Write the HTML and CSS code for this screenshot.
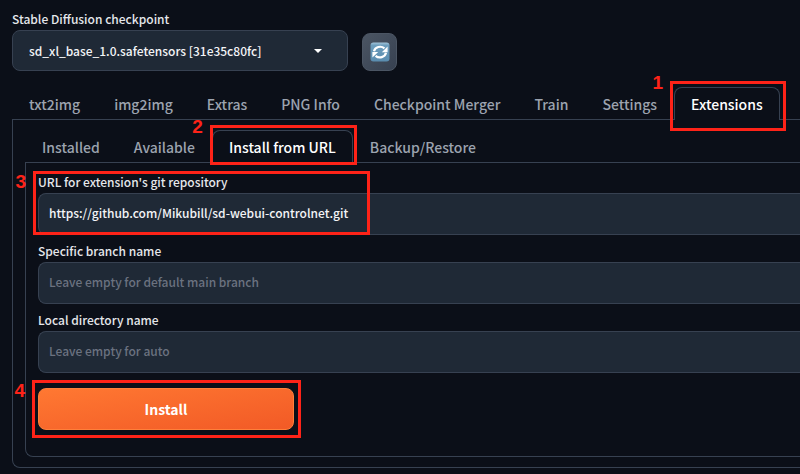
FILE: index.html
```html
<!DOCTYPE html>
<html lang="en">

<head>
    <meta charset="UTF-8" />
    <meta name="viewport" content="width=device-width, initial-scale=1.0" />
    <title>Stable Diffusion</title>
    <link rel="stylesheet" href="styles.css">
</head>

<body>
    <header class="quicksettings">
        <div class="checkpoint">
            <label class="label" for="checkpoint">Stable Diffusion checkpoint</label>
            <div class="select-wrap">
                <select class="control select" id="checkpoint">
                    <option>sd_xl_base_1.0.safetensors [31e35c80fc]</option>
                </select>
                <svg class="arrow" viewBox="0 0 8 4" aria-hidden="true">
                    <path d="M0 0h8L4 4z" fill="#fff" />
                </svg>
            </div>
        </div>
        <button class="refresh" type="button" aria-label="Refresh">
            <svg viewBox="0 0 20 20" aria-hidden="true">
                <defs>
                    <linearGradient id="tile" x1="0" y1="0" x2="0" y2="1">
                        <stop offset="0" stop-color="#a3c5da" />
                        <stop offset="0.15" stop-color="#6d9dbc" />
                        <stop offset="1" stop-color="#5a8caf" />
                    </linearGradient>
                </defs>
                <rect x="0.5" y="0.5" width="19" height="19" rx="3" fill="url(#tile)" />
                <path d="M4 9.2A6.2 5.6 0 0 1 14.4 6.4M16 10.8A6.2 5.6 0 0 1 5.6 13.8" fill="none" stroke="#fff" stroke-width="2.2" />
                <path d="M17.6 4.6v5.6h-5.8zM2.4 15.6V10h5.8z" fill="#fff" />
            </svg>
        </button>
    </header>

    <nav class="tabs">
        <button class="tab" type="button">txt2img</button>
        <button class="tab" type="button">img2img</button>
        <button class="tab" type="button">Extras</button>
        <button class="tab" type="button">PNG Info</button>
        <button class="tab" type="button">Checkpoint Merger</button>
        <button class="tab" type="button">Train</button>
        <button class="tab" type="button">Settings</button>
        <button class="tab active" type="button">Extensions
            <span class="callout callout-main-tab"><span class="step">1</span></span>
        </button>
    </nav>

    <main class="panel">
        <nav class="tabs">
            <button class="tab" type="button">Installed</button>
            <button class="tab" type="button">Available</button>
            <button class="tab active" type="button">Install from URL
                <span class="callout callout-sub-tab"><span class="step">2</span></span>
            </button>
            <button class="tab" type="button">Backup/Restore</button>
        </nav>

        <form class="panel panel-form">
            <div class="field">
                <label class="label" for="url">URL for extension's git repository</label>
                <input class="control" id="url" type="text" value="https://github.com/Mikubill/sd-webui-controlnet.git">
                <span class="callout callout-url"><span class="step step-low">3</span></span>
            </div>
            <div class="field">
                <label class="label" for="branch">Specific branch name</label>
                <input class="control" id="branch" type="text" placeholder="Leave empty for default main branch">
            </div>
            <div class="field">
                <label class="label" for="dirname">Local directory name</label>
                <input class="control" id="dirname" type="text" placeholder="Leave empty for auto">
            </div>
            <button class="install" type="button">Install
                <span class="callout callout-install"><span class="step step-low">4</span></span>
            </button>
        </form>
    </main>
</body>

</html>
```
FILE: styles.css
```css
* {
    margin: 0;
    padding: 0;
    box-sizing: border-box;
}

body {
    font-family: "Noto Sans CJK JP", "Open Sans", sans-serif;
    font-size: 12px;
    font-weight: 500;
    background: #0b0f18;
    color: #f3f4f6;
    padding: 9px 0 6px 12px;
    overflow-x: hidden;
}

button,
input,
select {
    font: inherit;
    color: inherit;
}

.label {
    display: block;
    padding-bottom: 1px;
    line-height: 20px;
    color: #e5e7eb;
}

.control {
    display: block;
    width: 100%;
    height: 42px;
    padding: 0 10px 3px;
    color: #f3f4f6;
    background: #1f2936;
    border: 1px solid #374151;
    border-radius: 8px;
}

.control::placeholder {
    color: #6b7280;
    opacity: 1;
}

/* Checkpoint row */
.quicksettings {
    display: flex;
    align-items: flex-end;
    gap: 14px;
    margin-bottom: 16px;
}

.checkpoint {
    width: 336px;
}

.select-wrap {
    position: relative;
}

.select {
    height: 41px;
    padding: 0 16px;
    appearance: none;
}

.arrow {
    position: absolute;
    top: 19px;
    right: 26px;
    width: 8px;
    height: 4px;
    pointer-events: none;
}

.refresh {
    display: flex;
    align-items: center;
    justify-content: center;
    width: 35px;
    height: 38px;
    background: linear-gradient(to bottom right, #4b5563, #374151);
    border: 1px solid #4b5563;
    border-radius: 8px;
}

.refresh svg {
    width: 20px;
    height: 20px;
}

/* Tabs */
.tabs {
    display: flex;
}

.tab {
    position: relative;
    height: 32px;
    padding: 0 16px;
    font-size: 14px;
    line-height: 33px;
    white-space: nowrap;
    color: #9ca3af;
    background: none;
    border: 1px solid transparent;
    border-bottom: none;
    border-radius: 8px 8px 0 0;
}

.tab.active {
    z-index: 1;
    height: 33px;
    margin-bottom: -1px;
    color: #fff;
    background: #0b0f18;
    border-color: #374151;
}

/* Panels run off the right side of the window */
.panel {
    padding: 10px 0 10px 12px;
    border: 1px solid #374151;
    border-right: none;
    border-radius: 0 0 0 8px;
}

.panel-form {
    padding: 9px 0 26px 12px;
}

.field {
    position: relative;
    margin-bottom: 6px;
}

.field .control {
    border-right: none;
    border-radius: 8px 0 0 8px;
}

.install {
    position: relative;
    width: 256px;
    height: 42px;
    margin-top: 9px;
    font-size: 14px;
    font-weight: 700;
    color: #fff;
    background: linear-gradient(to bottom right, #ff7832, #f25a26);
    border: 1px solid #ff7f3a;
    border-radius: 8px;
}

/* Numbered callouts */
.callout {
    position: absolute;
    z-index: 2;
    border: 3px solid #fe2318;
    pointer-events: none;
}

.callout-main-tab {
    inset: -7px -7px -11px -5px;
}

.callout-sub-tab {
    inset: -6px -5px -2px -3px;
}

.callout-url {
    top: -1px;
    left: -5px;
    width: 337px;
    height: 64px;
}

.callout-install {
    inset: -9px -8px -9px -7px;
}

.step {
    position: absolute;
    top: -11px;
    right: 100%;
    margin-right: 10px;
    font-family: "Liberation Sans", Arial, sans-serif;
    font-size: 19px;
    font-weight: 700;
    line-height: 20px;
    color: #fe2318;
}

.step-low {
    top: -2px;
}
```
